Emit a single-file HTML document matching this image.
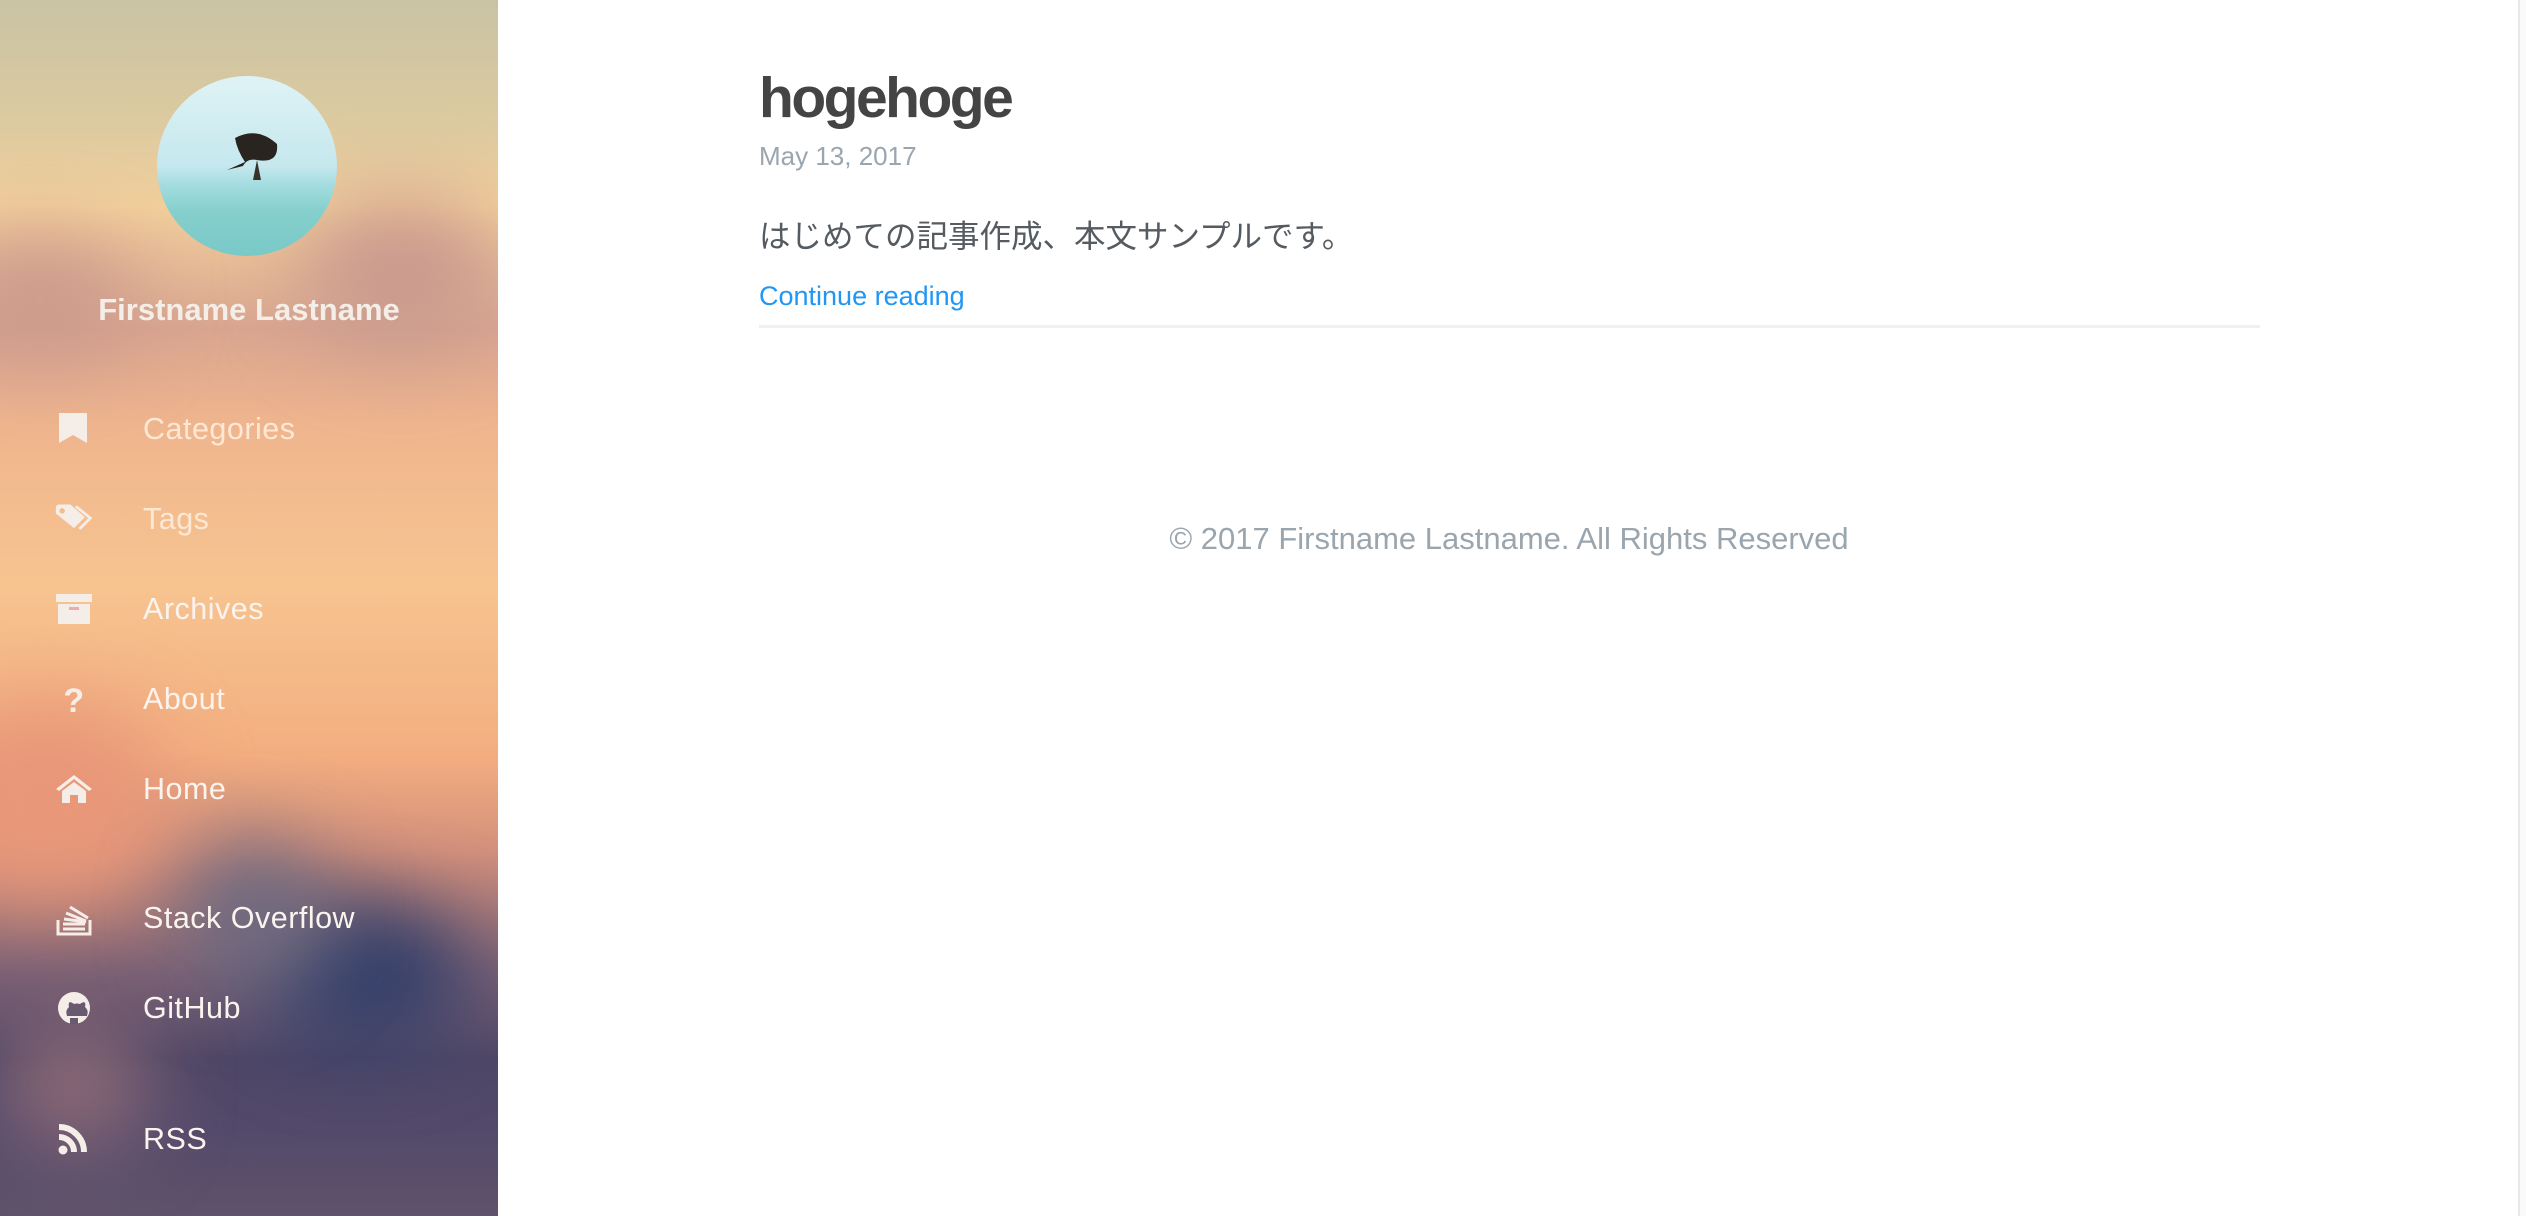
<!DOCTYPE html>
<html><head><meta charset="utf-8"><style>
html,body{margin:0;padding:0;width:2526px;height:1216px;overflow:hidden;background:#fff;font-family:"Liberation Sans","Noto Sans CJK JP",sans-serif}
#side{position:absolute;left:0;top:0;width:498px;height:1216px;overflow:hidden;
background:linear-gradient(180deg,#c9c3a3 0%,#dccaa0 10%,#f2cf9c 17%,#d9a590 27%,#efb58e 35%,#f7c490 48%,#f3ae80 62%,#d3907c 70%,#7c6175 80%,#4f4767 87%,#534a6b 93%,#5f526a 100%)}
.blob{position:absolute;border-radius:50%;filter:blur(40px)}
#av{position:absolute;left:157px;top:76px;width:180px;height:180px;border-radius:50%;overflow:hidden;
background:linear-gradient(180deg,#dff3f5 0%,#c5e8ee 50%,#a5dde0 60%,#85cfcc 75%,#79c9c8 100%)}
#name{position:absolute;left:0;width:498px;top:292px;text-align:center;color:#f3eee8;font-weight:bold;font-size:31px}
.nav{position:absolute;left:0;width:498px;height:40px;color:#fbf4ee;font-size:30.5px;letter-spacing:0.5px}
.nav svg{position:absolute;left:54px;top:2px;width:40px;height:36px}
.nav span{position:absolute;left:143px;top:0;line-height:40px}
#main{position:absolute;left:759px;top:0;width:1501px}
h1{position:absolute;top:63px;margin:0;font-size:57px;color:#444;letter-spacing:-2.5px;font-weight:bold;line-height:70px}
#date{position:absolute;top:141px;font-size:26px;color:#9aa5ae}
#body{position:absolute;top:211px;font-size:31.5px;color:#555b60}
#cont{position:absolute;top:281px;font-size:27px;color:#2196f3}
#hr{position:absolute;top:325px;left:0;width:1501px;height:3px;background:#eef0f4}
#foot{position:absolute;left:498px;width:2022px;top:521px;text-align:center;font-size:31px;color:#9aa5ae}
#edge{position:absolute;right:0;top:0;width:6px;height:1216px;border-left:2px solid #e8e8e8;background:#fafafa}
</style></head><body>
<div id="side">
<div class="blob" style="left:300px;top:200px;width:200px;height:150px;background:#c99a8e"></div>
<div class="blob" style="left:-60px;top:240px;width:200px;height:120px;background:#cc9a8c"></div>
<div class="blob" style="left:-80px;top:700px;width:250px;height:200px;background:#e89779"></div>
<div class="blob" style="left:250px;top:900px;width:220px;height:150px;background:#34406a"></div>
<div class="blob" style="left:180px;top:840px;width:150px;height:150px;background:#6e6a80"></div>
<div class="blob" style="left:0px;top:1020px;width:150px;height:130px;background:#8d6a76"></div>
<div id="av"><svg width="180" height="180" viewBox="0 0 180 180"><path d="M78 62 Q100 50 120 68 Q122 88 100 84 Q90 82 86 90 L70 94 L88 86 Q80 74 78 62Z" fill="#2a2420"/><path d="M100 84 L104 104 L96 104 Z" fill="#3a302a"/></svg></div>
<div id="name">Firstname Lastname</div>
<div class="nav" style="top:409px"><svg viewBox="0 0 40 36"><path d="M5 2h28v30l-14-8-14 8z" fill="#f5eee8"/></svg><span style="color:#fde8d6">Categories</span></div>
<div class="nav" style="top:499px"><svg viewBox="0 0 44 36"><path d="M2 6q0-4 4-4h12l16 14-12 12L2 12z" fill="#f5eee8"/><path d="M24 4l16 13-12 12" stroke="#f5eee8" stroke-width="3" fill="none"/><circle cx="9" cy="9" r="3" fill="#f2bd8e"/></svg><span style="color:#fde8d6">Tags</span></div>
<div class="nav" style="top:589px"><svg viewBox="0 0 40 36"><rect x="2" y="3" width="36" height="8" fill="#f5eee8"/><rect x="4" y="13" width="32" height="20" fill="#f5eee8"/><rect x="15" y="16" width="10" height="3" fill="#eaa"/></svg><span>Archives</span></div>
<div class="nav" style="top:679px"><svg viewBox="0 0 40 36"><text x="20" y="31" text-anchor="middle" font-size="34" font-weight="bold" fill="#f5eee8" font-family="Liberation Sans">?</text></svg><span>About</span></div>
<div class="nav" style="top:769px"><svg viewBox="0 0 40 36"><path d="M2 18L20 4l18 14-3 2-15-12L5 20z M8 20l12-9 12 9v12h-8v-8h-8v8H8z" fill="#f5eee8"/></svg><span>Home</span></div>
<div class="nav" style="top:898px"><svg viewBox="0 0 40 36"><path d="M4 20v14h32V20" stroke="#f5eee8" stroke-width="3" fill="none"/><path d="M9 29h22M9 24h22M10 19l22 3M12 13l20 8M16 7l18 11" stroke="#f5eee8" stroke-width="3"/></svg><span>Stack Overflow</span></div>
<div class="nav" style="top:988px"><svg viewBox="0 0 40 36"><circle cx="20" cy="18" r="16" fill="#f5eee8"/><path d="M13 26q-2-6 2-9-1-4 1-5 3 1 4 2 3-1 6 0 1-1 4-2 2 1 1 5 4 3 2 9z" fill="#6a5a70"/><path d="M16 28v6h8v-6z" fill="#6a5a70"/></svg><span>GitHub</span></div>
<div class="nav" style="top:1119px"><svg viewBox="0 0 40 36"><circle cx="9" cy="29" r="4.5" fill="#f5eee8"/><path d="M5 16a15 15 0 0 1 15 15M5 6a25 25 0 0 1 25 25" stroke="#f5eee8" stroke-width="6" fill="none"/></svg><span>RSS</span></div>
</div>
<div id="main">
<h1>hogehoge</h1>
<div id="date">May 13, 2017</div>
<div id="body">はじめての記事作成、本文サンプルです。</div>
<div id="cont">Continue reading</div>
<div id="hr"></div>
</div>
<div id="foot">© 2017 Firstname Lastname. All Rights Reserved</div>
<div id="edge"></div>
</body></html>
